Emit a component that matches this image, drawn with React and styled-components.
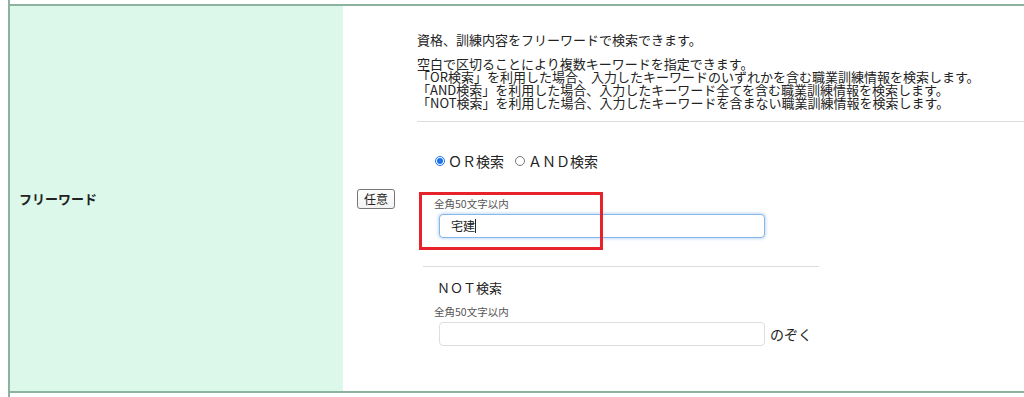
import React from 'react';
import styled, { createGlobalStyle } from 'styled-components';

const LINE = '#8cb39e';

const GlobalStyle = createGlobalStyle`
    body {
        margin: 0;
        background: #fff;
        color: #222;
        font-family: "Noto Sans CJK JP", "Noto Sans", sans-serif;
    }
`;

const FREEWORD_NOTES = [
    '空白で区切ることにより複数キーワードを指定できます。',
    '「OR検索」を利用した場合、入力したキーワードのいずれかを含む職業訓練情報を検索します。',
    '「AND検索」を利用した場合、入力したキーワード全てを含む職業訓練情報を検索します。',
    '「NOT検索」を利用した場合、入力したキーワードを含まない職業訓練情報を検索します。',
];

export default function App() {
    return (
        <>
            <GlobalStyle />
            <StyledPage>
                <StyledTable>
                    <StyledStub />
                    <StyledRow>
                        <StyledHead>フリーワード</StyledHead>
                        <StyledCell>
                            <StyledBadgeCol>
                                <StyledBadge>任意</StyledBadge>
                            </StyledBadgeCol>
                            <StyledMain>
                                <StyledText>資格、訓練内容をフリーワードで検索できます。</StyledText>
                                <StyledText $gap>
                                    {FREEWORD_NOTES.map((line) => (
                                        <React.Fragment key={line}>
                                            {line}
                                            <br />
                                        </React.Fragment>
                                    ))}
                                </StyledText>
                                <StyledRule />
                                <StyledRadios>
                                    <StyledOption>
                                        <input type="radio" name="mode" defaultChecked />
                                        ＯＲ検索
                                    </StyledOption>
                                    <StyledOption>
                                        <input type="radio" name="mode" />
                                        ＡＮＤ検索
                                    </StyledOption>
                                </StyledRadios>
                                <StyledGroup>
                                    <StyledHint>全角50文字以内</StyledHint>
                                    <StyledInputWrap>
                                        <StyledInput $focused defaultValue="宅建" />
                                        <StyledCaretLayer aria-hidden>
                                            <span>宅建</span>
                                            <StyledCaret />
                                        </StyledCaretLayer>
                                    </StyledInputWrap>
                                    <StyledMarker />
                                </StyledGroup>
                                <StyledRule $short />
                                <StyledSubTitle>ＮＯＴ検索</StyledSubTitle>
                                <StyledHint $tight>全角50文字以内</StyledHint>
                                <StyledInputRow>
                                    <StyledInput />
                                    <StyledSuffix>のぞく</StyledSuffix>
                                </StyledInputRow>
                            </StyledMain>
                        </StyledCell>
                    </StyledRow>
                    <StyledStub />
                </StyledTable>
            </StyledPage>
        </>
    );
}

const StyledPage = styled.div`
    padding-left: 8px;
    height: 397px;
    overflow: hidden;
`;

const StyledTable = styled.div`
    border-left: 2px solid ${LINE};
`;

const StyledStub = styled.div`
    height: 4px;
`;

const StyledRow = styled.div`
    display: grid;
    grid-template-columns: 333px 1fr;
    border-top: 2px solid ${LINE};
    border-bottom: 2px solid ${LINE};
`;

const StyledHead = styled.div`
    display: flex;
    align-items: center;
    padding-left: 9px;
    background: #dcf8ea;
    font-size: 13px;
    font-weight: 700;
`;

const StyledCell = styled.div`
    display: flex;
    gap: 22px;
    padding-left: 14px;
`;

const StyledBadgeCol = styled.div`
    display: flex;
    align-items: center;
`;

const StyledBadge = styled.span`
    display: inline-flex;
    align-items: center;
    height: 20px;
    padding: 0 6px;
    border: 1px solid #777;
    border-radius: 3px;
    background: linear-gradient(#fff, #f3f3f3);
    box-sizing: border-box;
    font-size: 12px;
    line-height: 1;
`;

const StyledMain = styled.div`
    flex: 1;
    padding: 27px 0 45px;
`;

const StyledText = styled.p`
    margin: ${({ $gap }) => ($gap ? '11px 0 0' : '0')};
    font-size: 13px;
    line-height: 13px;
    white-space: nowrap;
`;

const StyledRule = styled.hr`
    height: 1px;
    margin: ${({ $short }) => ($short ? '28.5px 0 0 6px' : '12px 0 0')};
    width: ${({ $short }) => ($short ? '396px' : 'auto')};
    border: 0;
    background: #dcdcdc;
`;

const StyledRadios = styled.div`
    display: flex;
    align-items: center;
    gap: 11px;
    height: 20px;
    margin-top: 28.5px;
    padding-left: 18px;
`;

const StyledOption = styled.label`
    display: flex;
    align-items: center;
    gap: 3px;
    font-size: 14px;
    line-height: 20px;

    input {
        width: 10px;
        height: 10px;
        margin: 0;
        accent-color: #1a73e8;
    }
`;

const StyledGroup = styled.div`
    position: relative;
    margin-top: 26px;
`;

const StyledHint = styled.div`
    height: 14px;
    margin-top: ${({ $tight }) => ($tight ? '9.5px' : '0')};
    padding-left: 17px;
    color: #555;
    font-size: 10.5px;
    line-height: 14px;
`;

const StyledInputWrap = styled.div`
    position: relative;
    width: 326px;
    margin: 3px 0 0 22px;
`;

const StyledInput = styled.input`
    display: block;
    width: 326px;
    height: 24px;
    padding: 0 11px;
    border: 1px solid ${({ $focused }) => ($focused ? '#86b7ea' : '#dedede')};
    border-radius: 4px;
    box-shadow: ${({ $focused }) => ($focused ? '0 0 3px 1px rgba(80, 150, 230, 0.35)' : 'none')};
    box-sizing: border-box;
    outline: none;
    color: #222;
    font-family: inherit;
    font-size: 12px;
`;

const StyledCaretLayer = styled.div`
    position: absolute;
    top: 0;
    left: 12px;
    display: flex;
    align-items: center;
    height: 24px;
    font-size: 12px;

    span {
        visibility: hidden;
    }
`;

const StyledCaret = styled.i`
    width: 1px;
    height: 14px;
    background: #222;
`;

const StyledMarker = styled.div`
    position: absolute;
    top: -5px;
    left: 2px;
    width: 184px;
    height: 58px;
    border: 3px solid #e8222b;
    box-sizing: border-box;
    pointer-events: none;
`;

const StyledSubTitle = styled.div`
    margin-top: 12.5px;
    padding-left: 20px;
    font-size: 13px;
    line-height: 16px;
`;

const StyledInputRow = styled.div`
    display: flex;
    align-items: center;
    gap: 5px;
    margin: 3px 0 0 22px;
`;

const StyledSuffix = styled.span`
    font-size: 14px;
`;
